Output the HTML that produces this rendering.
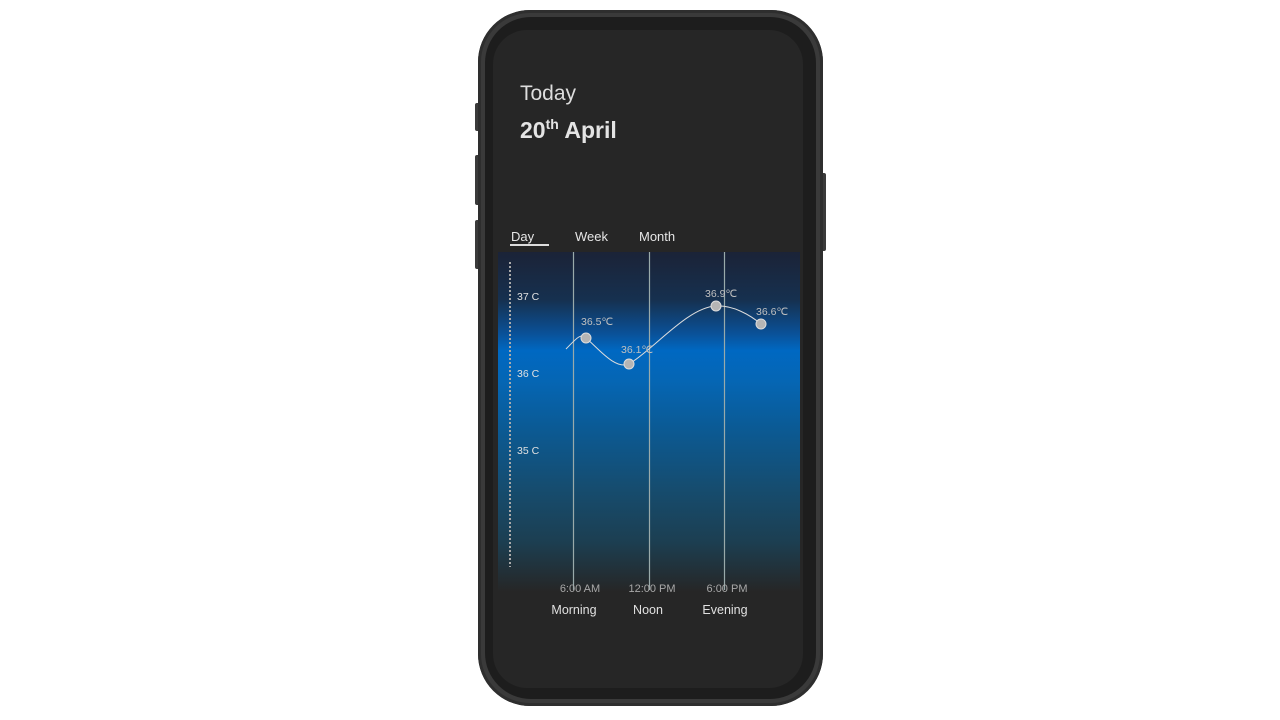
<!DOCTYPE html>
<html><head><style>
body{margin:0;width:1280px;height:720px;background:#fff;position:relative;overflow:hidden;font-family:"Liberation Sans",sans-serif}
.btn{position:absolute;background:#3a3a3a;border-radius:2px}
.phone{position:absolute;left:478px;top:10px;width:345px;height:696px;border-radius:52px;background:#3a3a3a;box-shadow:inset 0 0 0 3px #2e2e2e}
.bezel{position:absolute;left:485px;top:17px;width:331px;height:682px;border-radius:46px;background:#1d1d1d}
.screen{position:absolute;left:493px;top:30px;width:310px;height:658px;border-radius:34px;background:#262626;overflow:hidden}
.chart{position:absolute;left:5px;top:222px;width:302px;height:340px;background:linear-gradient(#1b2337 0%,#16304f 14%,#0a5198 24%,#0068c2 29%,#0566b4 38%,#0b5a94 52%,#164c6e 70%,#1c3f52 85%,#262626 100%)}
.t{position:absolute;color:#e6e6e6;white-space:nowrap}
</style></head><body>
<div class="btn" style="left:475px;top:103px;width:5px;height:28px"></div>
<div class="btn" style="left:475px;top:155px;width:5px;height:50px"></div>
<div class="btn" style="left:475px;top:220px;width:5px;height:49px"></div>
<div class="btn" style="left:821px;top:173px;width:5px;height:78px"></div>
<div class="phone"></div>
<div class="bezel"></div>
<div class="screen">
 <div class="t" style="left:27px;top:52px;font-size:21px;color:#ddd">Today</div>
 <div class="t" style="left:27px;top:86px;font-size:23px;font-weight:bold;color:#e4e4e4">20<sup style="font-size:14px;vertical-align:9px">th</sup> April</div>
 <div class="t" style="left:18px;top:199px;font-size:13px">Day</div>
 <div style="position:absolute;left:17px;top:214px;width:39px;height:2px;background:#ddd"></div>
 <div class="t" style="left:82px;top:199px;font-size:13px">Week</div>
 <div class="t" style="left:146px;top:199px;font-size:13px">Month</div>
 <div class="chart"></div>
 <svg style="position:absolute;left:0;top:0" width="310" height="658">
  <line x1="17" y1="232" x2="17" y2="537" stroke="#aaa" stroke-width="2" stroke-dasharray="2,2"/>
  <g stroke="#9aa" stroke-width="1.2"><line x1="80.5" y1="222" x2="80.5" y2="560"/><line x1="156.5" y1="222" x2="156.5" y2="560"/><line x1="231.5" y1="222" x2="231.5" y2="560"/></g>
  <path d="M73 319 C82 310 88 302 93 308 C105 318 122 340 136 334 C160 320 195 277 223 276 C240 275 257 285 268 294" fill="none" stroke="#ddd" stroke-width="1"/>
  <g fill="#b5b5b5" stroke="#ddd" stroke-width="1"><circle cx="93" cy="308" r="5"/><circle cx="136" cy="334" r="5"/><circle cx="223" cy="276" r="5"/><circle cx="268" cy="294" r="5"/></g>
  <g fill="#c0c0c0" font-size="10.5" font-family="Liberation Sans"><text x="88" y="295">36.5℃</text><text x="128" y="323">36.1℃</text><text x="212" y="267">36.9℃</text><text x="263" y="285">36.6℃</text></g>
  <g fill="#e0e0e0" font-size="10.5" font-family="Liberation Sans"><text x="24" y="270">37 C</text><text x="24" y="347">36 C</text><text x="24" y="424">35 C</text></g>
  <g fill="#a8a8a8" font-size="11" font-family="Liberation Sans" text-anchor="middle"><text x="87" y="562">6:00 AM</text><text x="159" y="562">12:00 PM</text><text x="234" y="562">6:00 PM</text></g>
  <g fill="#e0e0e0" font-size="12.5" font-family="Liberation Sans" text-anchor="middle"><text x="81" y="584">Morning</text><text x="155" y="584">Noon</text><text x="232" y="584">Evening</text></g>
 </svg>
</div>
</body></html>
